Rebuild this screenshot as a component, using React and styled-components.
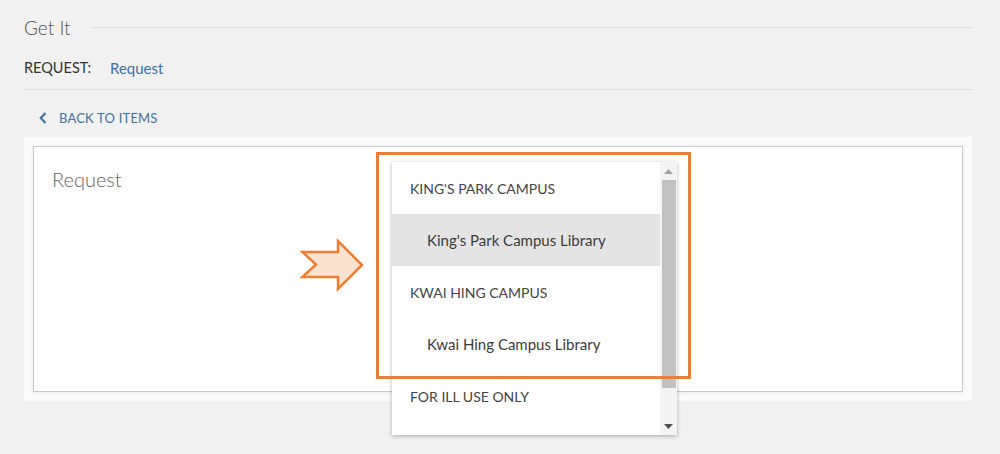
import React from "react";
import styled, { createGlobalStyle } from "styled-components";

const GlobalStyle = createGlobalStyle`
  html, body {
    margin: 0;
    padding: 0;
    background: #f1f1f1;
    font-family: Lato, "Open Sans", "Liberation Sans", sans-serif;
  }
`;

const Page = styled.div`
  position: relative;
  width: 1000px;
  height: 454px;
  padding: 0 28px 0 24px;
  box-sizing: border-box;
  overflow: hidden;
`;

const SectionHeader = styled.div`
  display: flex;
  align-items: center;
  height: 26px;
  padding-top: 14px;

  h2 {
    margin: 0;
    font-size: 19px;
    font-weight: 300;
    color: #555;
  }

  &::after {
    content: "";
    flex: 1;
    margin-left: 21px;
    border-top: 1px solid #dcdcdc;
  }
`;

const RequestRow = styled.div`
  display: flex;
  align-items: center;
  height: 43px;
  padding-top: 6px;
  border-bottom: 1px solid #dcdcdc;
`;

const Label = styled.span`
  text-transform: uppercase;
  color: #333;
  width: 86px;
  font-size: 14.5px;
`;

const LinkText = styled.span`
  color: #44709c;
  font-size: 15px;
`;

const BackRow = styled.div`
  display: flex;
  align-items: center;
  gap: 12px;
  height: 28px;
  margin-top: 14px;
  padding-left: 15px;
  color: #44709c;
  font-size: 13px;
  text-transform: uppercase;
  letter-spacing: 0.2px;
`;

const Panel = styled.div`
  margin-top: 5px;
  background: #fbfbfb;
  padding: 9px;
`;

const Card = styled.div`
  height: 246px;
  background: #fff;
  border: 1px solid #c9c9c9;
  box-shadow: 0 1px 4px rgba(0, 0, 0, 0.08);
  padding: 20px 18px;
  box-sizing: border-box;

  h3 {
    margin: 0;
    font-size: 20px;
    font-weight: 300;
    color: #666;
  }
`;

const Dropdown = styled.div`
  position: absolute;
  left: 392px;
  top: 162px;
  width: 285px;
  height: 273px;
  display: flex;
  background: #fff;
  box-shadow: 0 1px 4px rgba(0, 0, 0, 0.3);
`;

const List = styled.div`
  flex: 1;
  display: flex;
  flex-direction: column;
`;

const Item = styled.div`
  display: flex;
  align-items: center;
  height: 52px;
  flex-shrink: 0;
  padding-left: ${p => (p.$group ? "18px" : "35px")};
  background: ${p => (p.$active ? "#e4e4e4" : "transparent")};
  color: ${p => (p.$group ? "#444" : "#3c3c3c")};
  font-size: ${p => (p.$group ? "14px" : "15px")};
  text-transform: ${p => (p.$group ? "uppercase" : "none")};
`;

const Scrollbar = styled.div`
  width: 17px;
  display: flex;
  flex-direction: column;
  align-items: center;
  background: #f4f4f4;
`;

const ArrowBtn = styled.div`
  height: 18px;
  display: flex;
  align-items: center;
  justify-content: center;
  color: ${p => p.$color};
`;

const Thumb = styled.div`
  width: 14px;
  height: 208px;
  background: #c1c1c1;
`;

const Spacer = styled.div`
  flex: 1;
`;

const Highlight = styled.div`
  position: absolute;
  left: 376px;
  top: 152px;
  width: 315px;
  height: 227px;
  box-sizing: border-box;
  border: 3px solid #ef7e33;
  pointer-events: none;
`;

const Pointer = styled.svg`
  position: absolute;
  left: 300px;
  top: 238px;
`;

const Triangle = ({ up }) => (
  <svg width="9" height="5" viewBox="0 0 9 5">
    <path d={up ? "M0 5 L4.5 0 L9 5 Z" : "M0 0 L4.5 5 L9 0 Z"} fill="currentColor" />
  </svg>
);

const options = [
  { label: "King's Park Campus", group: true },
  { label: "King's Park Campus Library", active: true },
  { label: "Kwai Hing Campus", group: true },
  { label: "Kwai Hing Campus Library" },
  { label: "For ILL use only", group: true }
];

const App = () => (
  <>
    <GlobalStyle />
    <Page>
      <SectionHeader>
        <h2>Get It</h2>
      </SectionHeader>
      <RequestRow>
        <Label>Request:</Label>
        <LinkText>Request</LinkText>
      </RequestRow>
      <BackRow>
        <svg width="8" height="12" viewBox="0 0 8 12">
          <path d="M6.5 1 L1.8 6 L6.5 11" fill="none" stroke="currentColor" strokeWidth="2.2" />
        </svg>
        <span>Back to items</span>
      </BackRow>
      <Panel>
        <Card>
          <h3>Request</h3>
        </Card>
      </Panel>

      <Dropdown>
        <List>
          {options.map(o => (
            <Item key={o.label} $group={o.group} $active={o.active}>
              {o.label}
            </Item>
          ))}
        </List>
        <Scrollbar>
          <ArrowBtn $color="#a3a3a3">
            <Triangle up />
          </ArrowBtn>
          <Thumb />
          <Spacer />
          <ArrowBtn $color="#505050">
            <Triangle />
          </ArrowBtn>
        </Scrollbar>
      </Dropdown>

      <Highlight />
      <Pointer width="66" height="54" viewBox="0 0 66 54">
        <path
          d="M2.5 14 L38 14 L38 3 L62 27 L38 51 L38 39 L2.5 39 L16 26.5 Z"
          fill="#fce3d1"
          stroke="#ef7e33"
          strokeWidth="2.5"
          strokeLinejoin="miter"
        />
      </Pointer>
    </Page>
  </>
);

export default App;
